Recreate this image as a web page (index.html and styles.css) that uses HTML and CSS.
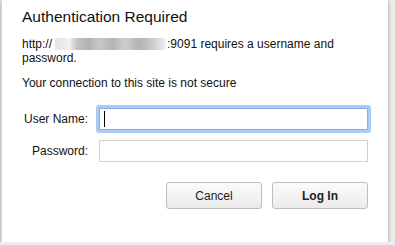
FILE: index.html
```html
<!DOCTYPE html>
<html lang="en">
<head>
  <meta charset="UTF-8" />
  <title>Authentication Required</title>
  <link rel="stylesheet" href="styles.css">
</head>
<body>
  <div class="dialog">
    <div class="title">Authentication Required</div>
    <p class="message">http://<span class="blurred"></span>:9091 requires a username and<br>password.</p>
    <p class="message">Your connection to this site is not secure</p>

    <form class="login-form">
      <label for="username">User Name:</label>
      <div class="field focused">
        <input type="text" id="username" name="username">
        <span class="caret"></span>
      </div>

      <label for="password">Password:</label>
      <div class="field">
        <input type="password" id="password" name="password">
      </div>
    </form>

    <div class="buttons">
      <button type="button" class="btn">Cancel</button>
      <button type="button" class="btn btn-default">Log In</button>
    </div>
  </div>
</body>
</html>
```

FILE: styles.css
```css
body {
  margin: 0;
  background-color: #ececec;
  font-family: "Liberation Sans", Arial, sans-serif;
  color: #111;
}

.dialog {
  width: 346px;
  height: 234px;
  margin: 0 7px 0 1px;
  padding: 8px 20px 0 20px;
  background-color: #fff;
  border-left: 1px solid #d4d4d4;
  box-shadow: 0 1px 4px rgba(0, 0, 0, 0.35);
}

.title {
  font-size: 15.5px;
  line-height: 18px;
  margin-bottom: 11px;
}

.message {
  font-size: 12px;
  line-height: 14px;
  margin: 0 0 11px;
}

/* hostname hidden in the original screenshot */
.blurred {
  display: inline-block;
  width: 111px;
  height: 12px;
  margin: 0 1px 0 3px;
  vertical-align: -2px;
  background: linear-gradient(90deg, #e4e7ea 0, #e8eaec 9px, #f2f2f2 14px, #c6c2c2 22px, #b6b2b2 34px, #c8c6c8 44px, #b8b4b6 58px, #d0ced1 70px, #b6b0b2 84px, #c9c7c9 96px, #dcdee1 104px, #eef0f2 111px);
}

.login-form {
  display: grid;
  grid-template-columns: 66px 269px;
  column-gap: 11px;
  row-gap: 10px;
  align-items: center;
  margin-top: 18px;
}

.login-form label {
  font-size: 12px;
  text-align: right;
}

.field {
  position: relative;
  height: 22px;
}

.field input {
  box-sizing: border-box;
  width: 100%;
  height: 22px;
  margin: 0;
  border: 1px solid #d2d2d2;
  outline: none;
  font-size: 12px;
}

.field.focused input {
  border-color: #86ade6;
  border-radius: 1px;
  box-shadow: 0 0 0 3px #a8cbf8;
}

.caret {
  position: absolute;
  left: 5px;
  top: 3px;
  width: 1px;
  height: 16px;
  background-color: #000;
}

.buttons {
  display: flex;
  justify-content: flex-end;
  gap: 10px;
  margin-top: 20px;
}

.btn {
  width: 96px;
  height: 27px;
  border: 1px solid #bdbdbd;
  border-radius: 3px;
  background: linear-gradient(#fbfbfb, #ebebeb);
  font-family: "Liberation Sans", Arial, sans-serif;
  font-size: 12px;
  color: #222;
}

.btn-default {
  font-weight: bold;
}
```
